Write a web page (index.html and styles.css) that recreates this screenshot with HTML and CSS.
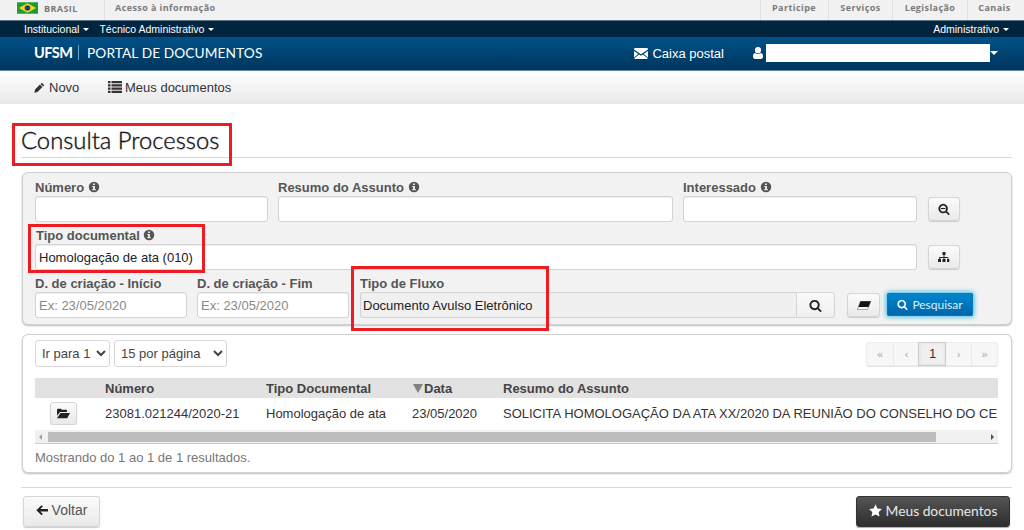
FILE: index.html
```html
<!DOCTYPE html>
<html lang="pt-BR">
<head>
<meta charset="utf-8">
<title>Consulta Processos</title>
<link rel="stylesheet" href="styles.css">
</head>
<body>
<svg class="defs" width="0" height="0" aria-hidden="true">
  <symbol id="i-search" viewBox="0 0 1792 1792"><path d="M1216 832q0-185-131.500-316.500t-316.500-131.500-316.500 131.500-131.500 316.500 131.500 316.500 316.500 131.500 316.500-131.500 131.500-316.500zm512 832q0 52-38 90t-90 38q-54 0-90-38l-343-342q-179 124-399 124-143 0-273.500-55.500t-225-150-150-225-55.500-273.500 55.500-273.500 150-225 225-150 273.500-55.500 273.500 55.500 225 150 150 225 55.500 273.500q0 220-124 399l343 343q37 37 37 90z"/></symbol>
  <symbol id="i-info" viewBox="0 0 16 16"><path fill-rule="evenodd" d="M8 1a7 7 0 1 1 0 14A7 7 0 0 1 8 1zM6.800 3.200v2.200h2.400V3.200zM5.800 6.500v1.500h1v2.700h-1v1.600h4.400v-1.600h-1V6.500z"/></symbol>
</svg>

<div class="govbar">
  <div class="gov-left">
    <svg class="flag" viewBox="0 0 22 12" aria-hidden="true"><rect width="22" height="12" fill="#1f9a3a"/><path d="M11 1l9 5-9 5-9-5z" fill="#f6d90f"/><circle cx="11" cy="6" r="2.900" fill="#1d3f8b"/></svg>
    <span class="gov-brasil">BRASIL</span>
    <span class="gov-link">Acesso à informação</span>
  </div>
  <div class="gov-right">
    <span class="gov-item w1">Participe</span>
    <span class="gov-item w2">Serviços</span>
    <span class="gov-item w3">Legislação</span>
    <span class="gov-item w4">Canais</span>
  </div>
</div>

<nav class="topnav">
  <div class="topnav-left">
    <span class="nav-link">Institucional <i class="caret"></i></span>
    <span class="nav-link">Técnico Administrativo <i class="caret"></i></span>
  </div>
  <span class="nav-link">Administrativo <i class="caret"></i></span>
</nav>

<header class="brandbar">
  <div class="brand">
    <strong class="brand-ufsm">UFSM</strong>
    <span class="brand-sep"></span>
    <span class="brand-name">PORTAL DE DOCUMENTOS</span>
  </div>
  <div class="brand-right">
    <span class="mail">
      <svg class="ic-mail" viewBox="0 0 14 11" aria-hidden="true"><path d="M0 1.200A1.200 1.200 0 0 1 1.200 0h11.600A1.200 1.200 0 0 1 14 1.200v.3L7 6.300 0 1.500zM0 3l4.300 3L0 9.500zM14 3v6.500L9.700 6zM5.200 6.600L7 7.800l1.800-1.200 5 3.700a1.200 1.200 0 0 1-1 .7H1.200a1.200 1.200 0 0 1-1-.7z"/></svg>
      Caixa postal
    </span>
    <span class="user">
      <svg class="ic-user" viewBox="0 0 10 12" aria-hidden="true"><path d="M5 0a3 3 0 0 1 3 3.200A3 3 0 0 1 5 6.300a3 3 0 0 1-3-3.100A3 3 0 0 1 5 0zM2 6c.8.700 1.800 1 3 1s2.200-.3 3-1c1.300.3 2 1.500 2 3.500 0 1.500-.8 2.500-2 2.500H2C.8 12 0 11 0 9.500 0 7.500.7 6.300 2 6z"/></svg>
      <span class="user-mask"></span>
      <i class="caret caret-lg"></i>
    </span>
  </div>
</header>

<div class="toolbar">
  <span class="tool tool-new">
    <svg class="ic-tool" viewBox="0 0 12 12" aria-hidden="true"><path d="M8.500.8l2.700 2.700-1.300 1.300-2.700-2.700zM6.500 2.800l2.700 2.700-5.400 5.400L.4 11.600l.7-3.400z"/></svg>
    Novo
  </span>
  <span class="tool">
    <svg class="ic-list" viewBox="0 0 14 12" aria-hidden="true"><path d="M0 0h2.500v2.200H0zM3.500 0H14v2.200H3.500zM0 3.200h2.500v2.200H0zM3.500 3.200H14v2.200H3.500zM0 6.500h2.500v2.200H0zM3.500 6.500H14v2.200H3.500zM0 9.700h2.500V12H0zM3.500 9.700H14V12H3.500z"/></svg>
    Meus documentos
  </span>
</div>

<main class="page">
  <h1 class="page-title">Consulta Processos</h1>

  <section class="panel panel-form">
    <div class="form-row">
      <label class="field f-numero"><span class="lbl">Número <svg class="ic-info"><use href="#i-info"/></svg></span><input class="inp" type="text"></label>
      <label class="field f-resumo"><span class="lbl">Resumo do Assunto <svg class="ic-info"><use href="#i-info"/></svg></span><input class="inp" type="text"></label>
      <label class="field f-inter"><span class="lbl">Interessado <svg class="ic-info"><use href="#i-info"/></svg></span><input class="inp" type="text"></label>
      <button class="btn btn-icon" type="button" aria-label="Buscar">
        <svg class="ic-sm" viewBox="0 0 1792 1792"><use href="#i-search"/><rect x="420" y="740" width="700" height="170"/></svg>
      </button>
    </div>
    <div class="form-row">
      <label class="field f-tipo"><span class="lbl lbl-tipo">Tipo documental <svg class="ic-info"><use href="#i-info"/></svg></span><input class="inp" type="text" value="Homologação de ata (010)"></label>
      <button class="btn btn-icon" type="button" aria-label="Árvore">
        <svg class="ic-sm" viewBox="0 0 12 12"><path d="M4.500 0h3v3h-1v2h3.800v2h1v3H9V7h.8V6H6.500v1h1v3h-3V7h1V6H2.200v1H3v3H0V7h1.200V5h4.300V3h-1z" transform="translate(0 1)"/></svg>
      </button>
    </div>
    <div class="form-row">
      <label class="field f-data"><span class="lbl">D. de criação - Início</span><input class="inp" type="text" placeholder="Ex: 23/05/2020"></label>
      <label class="field f-data"><span class="lbl">D. de criação - Fim</span><input class="inp" type="text" placeholder="Ex: 23/05/2020"></label>
      <div class="field f-fluxo">
        <span class="lbl">Tipo de Fluxo</span>
        <div class="input-group">
          <input class="inp inp-ro" type="text" value="Documento Avulso Eletrônico" readonly>
          <button class="btn btn-addon" type="button" aria-label="Buscar"><svg class="ic-md"><use href="#i-search"/></svg></button>
        </div>
      </div>
      <button class="btn btn-erase" type="button" aria-label="Limpar">
        <svg class="ic-erase" viewBox="0 0 14 9"><path d="M3.500.3h10.300L10.500 8.600H.3z" fill="#f4f4f4" stroke="#555" stroke-width=".5"/><path d="M3.500.3h10.300l-2.400 5.700H1.500z" fill="#111"/></svg>
      </button>
      <button class="btn btn-primary" type="button">
        <svg class="ic-pri"><use href="#i-search"/></svg> Pesquisar
      </button>
    </div>
  </section>

  <section class="panel panel-results">
    <div class="results-top">
      <div class="selects">
        <select class="sel sel-page"><option>Ir para 1</option></select>
        <select class="sel sel-size"><option>15 por página</option></select>
      </div>
      <div class="pager">
        <span class="pg">«</span><span class="pg">‹</span><span class="pg pg-on">1</span><span class="pg">›</span><span class="pg">»</span>
      </div>
    </div>
    <div class="tbl">
      <div class="tbl-row tbl-head">
        <span></span>
        <span>Número</span>
        <span>Tipo Documental</span>
        <span class="th-data"><i class="sort"></i>Data</span>
        <span>Resumo do Assunto</span>
      </div>
      <div class="tbl-row tbl-body">
        <span class="cell-btn">
          <button class="btn btn-folder" type="button" aria-label="Abrir">
            <svg class="ic-folder" viewBox="0 0 14 11"><path d="M0 1.500A1.200 1.200 0 0 1 1.200.3h3l1 1.200h4.600a1 1 0 0 1 1 1V4H3.300L0 8zM3.800 5H14l-3 5.500H0z"/></svg>
          </button>
        </span>
        <span>23081.021244/2020-21</span>
        <span>Homologação de ata</span>
        <span>23/05/2020</span>
        <span class="cell-long">SOLICITA HOMOLOGAÇÃO DA ATA XX/2020 DA REUNIÃO DO CONSELHO DO CENTRO</span>
      </div>
      <div class="scroll">
        <i class="arrow arrow-l"></i>
        <div class="scroll-track"><div class="scroll-thumb"></div></div>
        <i class="arrow arrow-r"></i>
      </div>
    </div>
    <p class="count">Mostrando do 1 ao 1 de 1 resultados.</p>
  </section>

  <div class="actions">
    <button class="btn btn-back" type="button">
      <svg class="ic-back" viewBox="0 0 12 11"><path d="M5.500.2l1.400 1.400-2.600 2.500H12v2.300H4.300l2.600 2.500-1.400 1.400L.3 5.300z"/></svg>
      Voltar
    </button>
    <button class="btn btn-dark" type="button">
      <svg class="ic-star" viewBox="0 0 12 12"><path d="M6 .3l1.800 3.800 4.100.5-3 2.900.8 4.100L6 9.600l-3.700 2 .8-4.100-3-2.900 4.100-.5z"/></svg>
      Meus documentos
    </button>
  </div>
</main>

<div class="mark mark-1"></div>
<div class="mark mark-2"></div>
<div class="mark mark-3"></div>
</body>
</html>
```
FILE: styles.css
```css
* { box-sizing: border-box; }
html, body { margin: 0; height: 530px; overflow: hidden; }
body { font-family: "Liberation Sans", Arial, sans-serif; font-size: 13px; color: #333; background: #fff; position: relative; }
.defs { position: absolute; }

/* Gov bar */
.govbar { height: 21px; background: #f1f1f1; border-bottom: 1px solid #5d7386; display: flex; justify-content: space-between; font-family: "Open Sans", sans-serif; font-weight: 700; font-size: 9px; letter-spacing: .42px; color: #7a7a7a; }
.gov-left { display: flex; align-items: center; padding-left: 17px; }
.flag { width: 21px; height: 12px; margin-top: -5px; }
.gov-brasil { margin-left: 6px; width: 60px; margin-top: -3px; }
.gov-link { height: 20px; border-left: 1px solid #e0e0e0; padding-left: 10px; line-height: 15px; }
.gov-right { display: flex; }
.gov-item { height: 20px; line-height: 15px; border-left: 1px solid #e0e0e0; text-align: center; }
.w1 { width: 68px; padding-right: 1px; } .w2 { width: 64px; } .w3 { width: 75px; } .w4 { width: 57px; padding-right: 3px; }

/* Nav */
.topnav { height: 16px; background: #00263f; color: #fff; display: flex; justify-content: space-between; align-items: center; font-size: 10.500px; padding: 0 15px 0 24px; }
.topnav-left { display: flex; gap: 10px; }
.nav-link { white-space: nowrap; }
.caret { display: inline-block; width: 0; height: 0; border: 3.500px solid transparent; border-top: 3.500px solid #fff; border-bottom: 0; margin-left: 1px; vertical-align: 2px; }
.caret-lg { border-width: 4.500px 4.500px 0; margin-left: 0; vertical-align: 0; }

/* Brand */
.brandbar { height: 34px; background: linear-gradient(#005189, #00365b); border-bottom: 1px solid #5f8ba8; display: flex; justify-content: space-between; align-items: center; color: #fff; padding: 0 26px 2px 34px; }
.brand { display: flex; align-items: center; }
.brand-ufsm { font-family: Lato, sans-serif; font-weight: 700; font-size: 14.500px; letter-spacing: -.5px; width: 38px; }
.brand-sep { width: 1px; height: 15px; background: #5fa5d0; margin: 0 8px 0 6px; }
.brand-name { font-family: Lato, sans-serif; font-size: 13.700px; letter-spacing: .1px; }
.brand-right { display: flex; align-items: center; }
.mail { font-size: 13px; white-space: nowrap; display: flex; align-items: center; gap: 4px; margin-right: 29px; padding-top: 2px; }
.ic-mail { width: 14px; height: 11px; fill: #fff; }
.user { display: flex; align-items: center; }
.ic-user { width: 10px; height: 12px; fill: #fff; margin-right: 3px; }
.user-mask { width: 224px; height: 18px; background: #fff; }

/* Toolbar */
.toolbar { height: 33px; background: linear-gradient(#fff, #e8e8e8); display: flex; align-items: center; padding: 0 0 1px 34px; color: #333; }
.tool { display: flex; align-items: center; white-space: nowrap; gap: 3px; }
.tool-new { width: 74px; gap: 4px; }
.ic-tool { width: 11px; height: 11px; fill: #333; }
.ic-list { width: 14px; height: 12px; fill: #333; }

/* Page */
.page { padding: 0 12px 0 21px; }
.page-title { margin: 0; height: 54px; border-bottom: 1px solid #d9d9d9; font-family: Lato, sans-serif; font-weight: 300; font-size: 23.800px; line-height: 73px; color: #111; -webkit-text-stroke: .3px #111; text-shadow: 0 1px 2px #ccc; white-space: nowrap; }

.panel { margin-left: 1px; border: 1px solid #d0d0d0; border-radius: 6px; box-shadow: 0 1px 2px #bbb; }
.panel-form { margin-top: 14px; height: 153px; background: #f2f2f2; padding: 1px 12px 0; }
.form-row { display: flex; align-items: flex-end; gap: 10px; height: 48px; }
.field { display: flex; flex-direction: column; flex: none; }
.lbl { height: 16px; line-height: 16px; font-weight: 700; font-size: 13px; color: #555; white-space: nowrap; }
.lbl-tipo { padding-left: 1px; }
.ic-info { width: 12px; height: 12px; fill: #555; vertical-align: -1px; }
.inp { display: block; width: 100%; height: 26px; border: 1px solid #d3d3d3; border-radius: 3px; background: #fff; padding: 0 3px; font-family: inherit; font-size: 13px; color: #222; box-shadow: inset 0 1px 1px #eee; outline: 0; }
.inp::placeholder { color: #8a8a8a; opacity: 1; }
.f-numero { width: 233px; }
.f-resumo { width: 395px; }
.f-inter { width: 234px; }
.f-tipo { width: 882px; }
.f-data { width: 152px; }
.f-fluxo { width: 475px; margin-left: 1px; }
.input-group { display: flex; }
.inp-ro { flex: 1; background: #f0f0f0; border-radius: 3px 0 0 3px; border-right: 0; padding-left: 2px; }

.btn { font-family: inherit; color: #333; border: 1px solid #d5d5d5; border-radius: 3px; background: linear-gradient(#fbfbfb, #e9e9e9); box-shadow: 0 1px 1px #ccc; padding: 0; display: flex; align-items: center; justify-content: center; flex: none; }
.btn-icon { width: 32px; height: 24px; margin: 0 0 1px 1px; }
.ic-sm { width: 12px; height: 12px; fill: #222; }
.btn-addon { width: 39px; height: 26px; border-radius: 0 3px 3px 0; background: linear-gradient(#fafafa, #efefef); box-shadow: none; }
.ic-md { width: 13px; height: 13px; fill: #222; }
.btn-erase { width: 33px; height: 24px; margin: 0 -3px 1px 2px; }
.ic-erase { width: 14px; height: 9px; }
.btn-primary { width: 86px; height: 23px; margin-bottom: 2px; gap: 4px; border: 1px solid #0a79b8; border-radius: 1px; background: linear-gradient(#0085cd, #0067ac); color: #dff1fb; font-family: Lato, sans-serif; font-size: 12px; box-shadow: 0 0 5px 1px #38bce8; }
.ic-pri { width: 11px; height: 11px; fill: #fff; }

/* Results */
.panel-results { margin-top: 9px; height: 139px; background: #fff; padding: 5px 13px 0 12px; }
.results-top { display: flex; justify-content: space-between; align-items: flex-start; height: 38px; }
.selects { display: flex; gap: 4px; }
.sel { height: 27px; border: 1px solid #d7d7d7; border-radius: 3px; background: #fff; font-family: inherit; font-size: 13px; color: #444; padding: 0 0 0 2px; }
.sel-page { width: 75px; }
.sel-size { width: 113px; }
.pager { display: flex; margin-top: 2px; border: 1px solid #ededed; border-radius: 3px; background: #f7f7f7; box-shadow: 0 1px 1px #e4e4e4; }
.pg { width: 26px; height: 22px; line-height: 22px; text-align: center; font-size: 11px; color: #aaa; border-left: 1px solid #eaeaea; }
.pg:first-child { border-left: 0; }
.pg-on { background: #f0f0f0; color: #333; font-size: 13px; box-shadow: 0 0 0 1px #ccc, inset 0 0 3px #ddd; position: relative; }

.tbl { width: 963px; overflow: hidden; }
.tbl-row { display: grid; grid-template-columns: 70px 161px 146px 91px 1fr; align-items: center; white-space: nowrap; font-size: 13px; }
.tbl-row > span { overflow: hidden; }
.tbl-head { height: 20px; background: #e2e2e2; font-weight: 700; color: #444; }
.th-data { padding-left: 1px; display: flex; align-items: center; }
.sort { width: 0; height: 0; border: 5px solid transparent; border-top: 9px solid #808080; border-bottom: 0; margin-right: 1px; }
.tbl-body { height: 32px; color: #333; padding-bottom: 2px; }
.cell-btn { padding-left: 15px; overflow: visible; }
.btn-folder { width: 27px; height: 23px; }
.ic-folder { width: 13px; height: 11px; fill: #222; }
.scroll { height: 14px; background: #f1f1f1; border-bottom: 1px solid #ccc; display: flex; align-items: center; padding: 0 4px; }
.scroll-track { flex: 1; height: 10px; padding: 0 55px 0 6px; }
.scroll-thumb { height: 100%; background: #bdbdbd; }
.arrow { width: 0; height: 0; border: 3px solid transparent; }
.arrow-l { border-right: 3px solid #a0a0a0; border-left: 0; }
.arrow-r { border-left: 3px solid #505050; border-right: 0; }
.count { margin: 5px 0 0; height: 18px; line-height: 18px; font-size: 13px; color: #777; }

/* Actions */
.actions { margin-top: 14px; border-top: 1px solid #d9d9d9; padding: 8px 2px 0; display: flex; justify-content: space-between; }
.btn-back { width: 77px; height: 31px; gap: 4px; padding-bottom: 3px; font-size: 14px; color: #555; }
.ic-back { width: 12px; height: 11px; fill: #222; }
.btn-dark { width: 154px; height: 31px; gap: 4px; padding-bottom: 3px; border: 1px solid #333; background: linear-gradient(#555, #2d2d2d); color: #e8e8e8; font-family: Lato, sans-serif; font-size: 13.800px; box-shadow: 0 1px 1px #aaa; }
.ic-star { width: 13px; height: 13px; fill: #fff; }

/* Red annotation frames */
.mark { position: absolute; border: 3px solid #ed1c24; pointer-events: none; }
.mark-1 { left: 12px; top: 123px; width: 220px; height: 43px; }
.mark-2 { left: 28px; top: 224px; width: 177px; height: 49px; }
.mark-3 { left: 351px; top: 266px; width: 198px; height: 65px; }
```
